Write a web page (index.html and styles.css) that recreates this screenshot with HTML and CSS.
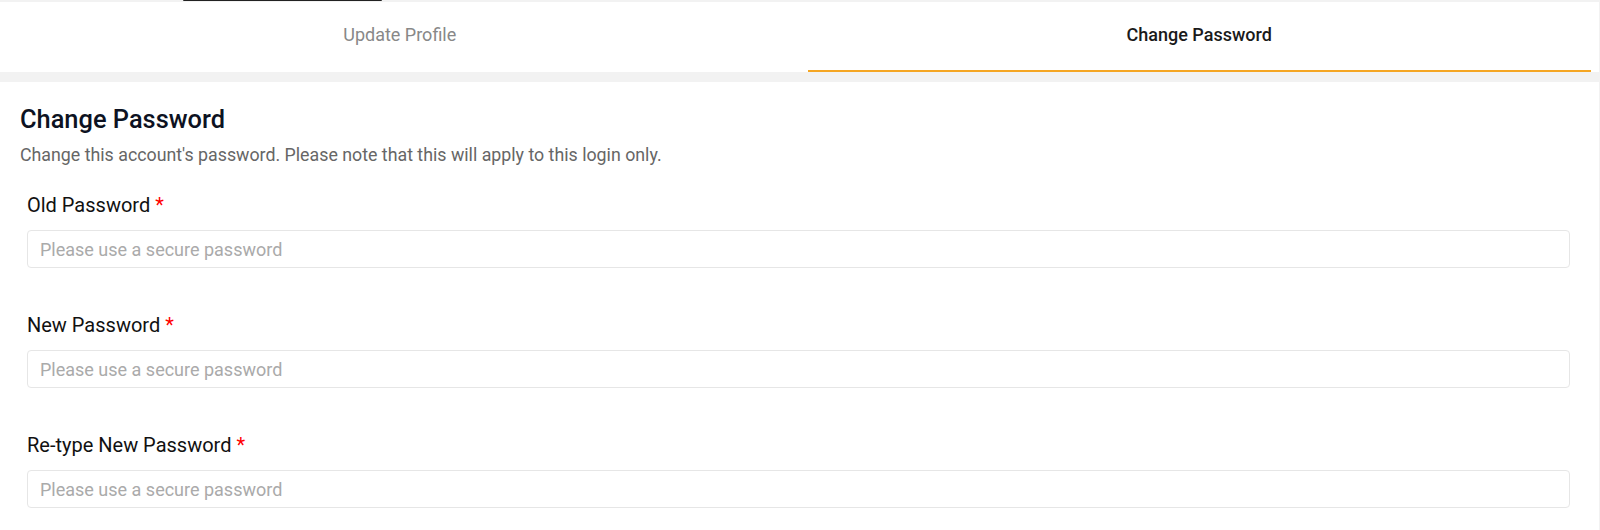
FILE: index.html
```html
<!DOCTYPE html>
<html>
<head>
<meta charset="utf-8">
<link rel="stylesheet" href="styles.css">
</head>
<body>
<div class="page">
  <div class="topstrip"><span class="topbar"></span></div>
  <div class="tabs">
    <div class="tab">Update Profile</div>
    <div class="tab active">Change Password</div>
  </div>
  <div class="gap"></div>
  <div class="panel">
    <h1 class="title">Change Password</h1>
    <p class="subtitle">Change this account's password. Please note that this will apply to this login only.</p>
    <div class="field">
      <label class="label">Old Password <span class="req">*</span></label>
      <input class="input" type="password" placeholder="Please use a secure password">
    </div>
    <div class="field">
      <label class="label">New Password <span class="req">*</span></label>
      <input class="input" type="password" placeholder="Please use a secure password">
    </div>
    <div class="field">
      <label class="label">Re-type New Password <span class="req">*</span></label>
      <input class="input" type="password" placeholder="Please use a secure password">
    </div>
  </div>
</div>
</body>
</html>
```
FILE: styles.css
```css
* { box-sizing: border-box; }
html, body {
  margin: 0;
  padding: 0;
  background: #f2f2f2;
  font-family: Roboto, "Liberation Sans", sans-serif;
  overflow: hidden;
}
.page {
  width: 1599px;
  height: 530px;
  display: flex;
  flex-direction: column;
}
.topstrip {
  height: 2px;
  padding-left: 183px;
  display: flex;
}
.topbar {
  width: 199px;
  height: 1px;
  background: #222;
  border-radius: 0 0 1px 1px;
}
.tabs {
  height: 70px;
  background: #fff;
  display: flex;
}
.tab {
  flex: 1;
  display: flex;
  align-items: center;
  justify-content: center;
  font-size: 18px;
  color: #888;
  padding-bottom: 3px;
  border-bottom: 2px solid transparent;
  margin: 0 8px;
}
.tab.active {
  color: #1a1a1a;
  font-weight: 500;
  border-bottom-color: #f5a623;
}
.gap { height: 10px; }
.panel {
  flex: 1;
  background: #fff;
  padding: 23px 29px 0 20px;
}
.title {
  margin: 0;
  font-size: 25.4px;
  line-height: 28px;
  font-weight: 500;
  color: #0d1222;
}
.subtitle {
  margin: 10px 0 0;
  font-size: 17.8px;
  line-height: 24px;
  color: #666;
}
.field {
  padding-left: 7px;
  display: flex;
  flex-direction: column;
  margin-top: 26px;
}
.field + .field { margin-top: 45px; }
.label {
  font-size: 20px;
  line-height: 24px;
  color: #111;
  margin-bottom: 13px;
}
.req { color: #f00; }
.input {
  height: 38px;
  border: 1px solid #e6e6e6;
  border-radius: 4px;
  padding: 0 12px;
  font-family: Roboto, "Liberation Sans", sans-serif;
  font-size: 18px;
  color: #333;
  outline: none;
}
.input::placeholder { color: #aaa; }
```
